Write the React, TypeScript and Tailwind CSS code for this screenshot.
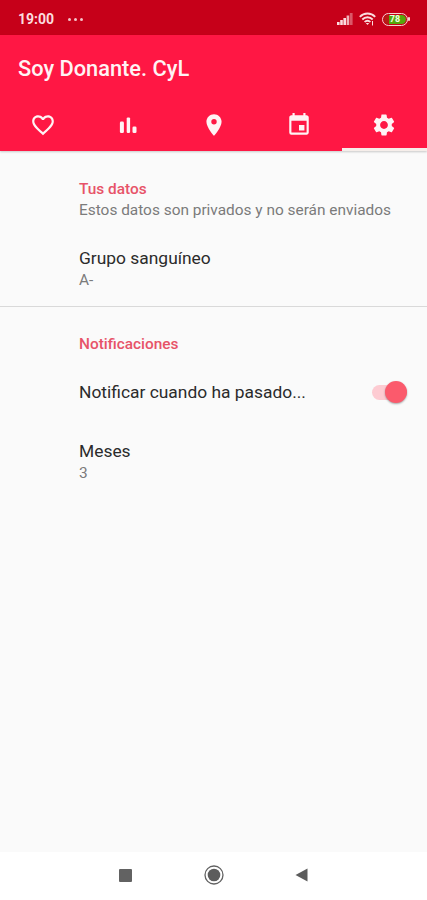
import React from 'react';
import { MdFavoriteBorder, MdPlace, MdEvent, MdSettings } from 'react-icons/md';

function BarsIcon() {
  return (
    <svg viewBox="0 0 26 26" className="h-[26px] w-[26px]" fill="currentColor">
      <rect x="4.9" y="9.6" width="4" height="11.4" rx="1.3" />
      <rect x="11.7" y="5.4" width="3.4" height="15.6" rx="1.2" />
      <rect x="17.5" y="14.4" width="4" height="6.6" rx="1.3" />
    </svg>
  );
}

function StatusBar() {
  return (
    <div className="flex h-[35px] items-center bg-[#c60019] pt-[3px] pr-[17px] pl-[18px] text-[#fbdcdf]">
      <span className="text-[14px] leading-4 font-bold">19:00</span>
      <div className="ml-[14px] flex gap-[3px]">
        <i className="h-[3px] w-[3px] rounded-full bg-[#f4c3c9]" />
        <i className="h-[3px] w-[3px] rounded-full bg-[#f4c3c9]" />
        <i className="h-[3px] w-[3px] rounded-full bg-[#f4c3c9]" />
      </div>

      {/* Signal */}
      <svg viewBox="0 0 16 12" className="ml-auto h-3 w-4" fill="currentColor">
        <rect x="0" y="9" width="2.6" height="3" />
        <rect x="3.2" y="7" width="2.6" height="5" />
        <rect x="6.4" y="5" width="2.6" height="7" />
        <rect x="9.6" y="2.5" width="2.6" height="9.5" opacity="0.8" />
        <rect x="12.8" y="0" width="2.8" height="12" opacity="0.4" />
      </svg>

      {/* Wifi */}
      <svg viewBox="0 0 17 14" className="ml-[6px] h-[14px] w-[17px]" fill="none" stroke="currentColor" strokeWidth="1.8">
        <path d="M.8 4.8C5 .4 12 .4 16.2 4.8" />
        <path d="M3.3 7.5c2.9-3 7.5-3 10.4 0" />
        <path d="M5.6 10c1.6-1.7 4.2-1.7 5.8 0" />
        <path d="M6.8 11h3.4l-1.7 2z" fill="currentColor" stroke="none" />
        <path d="M13.5 9v4.5" strokeWidth="1" />
      </svg>

      {/* Battery */}
      <div className="ml-[6px] flex h-[13px] w-[26px] items-center rounded-full border-[1.5px] border-[#f6d3d0] p-px">
        <div className="flex h-full w-full items-center justify-center rounded-full bg-linear-to-r from-[#b51c14] from-25% to-[#55a80b] to-25% text-[9px] leading-none font-bold text-[#f1ffe5]">
          78
        </div>
      </div>
      <i className="h-1 w-[2px] rounded-full bg-[#f6d3d0]" />
    </div>
  );
}

function Tab({ active, children }: { active?: boolean; children: React.ReactNode }) {
  return (
    <div
      className={
        active
          ? 'flex flex-1 items-center justify-center border-b-3 border-[#f6eeea] pt-[2px]'
          : 'flex flex-1 items-center justify-center border-b-3 border-transparent pt-[2px]'
      }
    >
      {children}
    </div>
  );
}

function Preference({ title, summary }: { title: string; summary: string }) {
  return (
    <div>
      <p className="text-[17.4px] leading-[23px] text-[#2b2b2b]">{title}</p>
      <p className="text-[15.42px] leading-[21px] text-[#7b7b7b]">{summary}</p>
    </div>
  );
}

export default function App() {
  return (
    <div className="flex h-[900px] w-[427px] flex-col overflow-hidden bg-[#fafafa] font-['Roboto',sans-serif]">
      <StatusBar />

      {/* Toolbar and tabs */}
      <header className="flex h-[116px] flex-col bg-[#ff1744] text-[#fff3f4] shadow-[0_1px_2px_rgba(0,0,0,0.2)]">
        <h1 className="pt-5 pl-[18px] text-[21.8px] leading-7 font-medium">Soy Donante. CyL</h1>
        <nav className="mt-auto flex h-[52px]">
          <Tab><MdFavoriteBorder size={26} /></Tab>
          <Tab><BarsIcon /></Tab>
          <Tab><MdPlace size={26} /></Tab>
          <Tab><MdEvent size={26} /></Tab>
          <Tab active><MdSettings size={26} /></Tab>
        </nav>
      </header>

      <main className="flex-1">
        <section className="h-[156px] border-b border-[#d9d9d9] pt-7 pl-[79px]">
          <h2 className="text-[15.4px] leading-[21px] font-medium text-[#e75368]">Tus datos</h2>
          <p className="mb-[26px] text-[15.42px] leading-[21px] text-[#7b7b7b]">
            Estos datos son privados y no serán enviados
          </p>
          <Preference title="Grupo sanguíneo" summary="A-" />
        </section>

        <section className="pt-[27px] pl-[79px]">
          <h2 className="text-[15.4px] leading-[21px] font-medium text-[#e75368]">Notificaciones</h2>
          <div className="mt-[25px] mb-9 flex items-center justify-between pr-5">
            <p className="pt-px text-[17.4px] leading-[23px] text-[#2b2b2b]">Notificar cuando ha pasado...</p>
            <div className="flex h-[15px] w-[35px] items-center justify-end rounded-full bg-[#fdcbd2]">
              <div className="h-[22px] w-[22px] shrink-0 rounded-full bg-[#fb5a6c] shadow-[0_1px_2px_rgba(0,0,0,0.35)]" />
            </div>
          </div>
          <Preference title="Meses" summary="3" />
        </section>
      </main>

      {/* System navigation */}
      <footer className="flex h-[48px] items-center bg-white pr-[119px] pb-[2px] pl-[119px]">
        <div className="flex w-full items-center justify-between">
          <i className="h-[13px] w-[13px] rounded-[1px] bg-[#626262]" />
          <svg viewBox="0 0 20 20" className="h-5 w-5">
            <circle cx="10" cy="10" r="9" fill="none" stroke="#626262" strokeWidth="1.3" />
            <circle cx="10" cy="10" r="6.3" fill="#5c5c5c" />
          </svg>
          <svg viewBox="0 0 13 14" className="h-[14px] w-[13px]">
            <path d="M12.5.5v13L.5 7z" fill="#5c5c5c" />
          </svg>
        </div>
      </footer>
    </div>
  );
}
